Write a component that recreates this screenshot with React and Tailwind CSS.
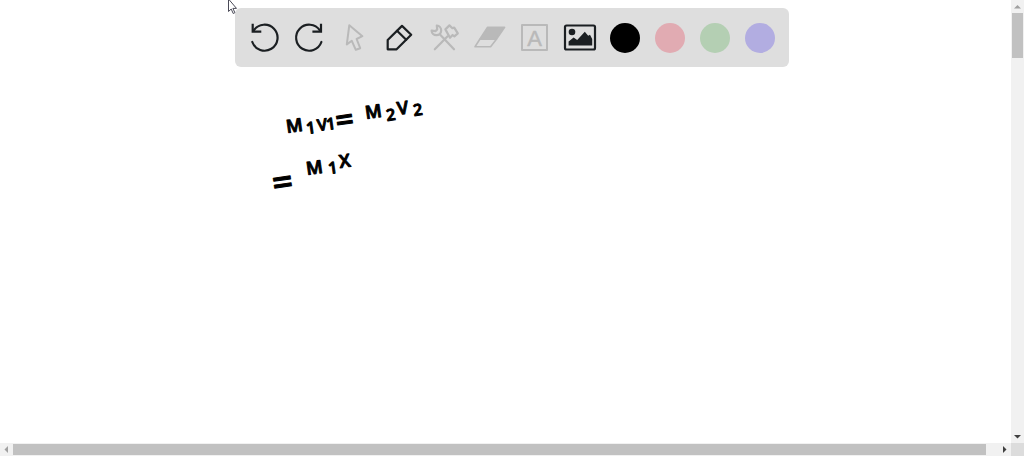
const INK = "#1b1f22";
const MUTED = "#b9b9b9";

const tools = [
  {
    name: "Undo",
    color: INK,
    icon: (
      <g strokeWidth="2.2">
        <path d="M5.3 22a13 13 0 1 0 1.5-11.6" />
        <path strokeLinecap="square" strokeLinejoin="miter" d="M5.7 4.8v6.9h7.5" />
      </g>
    ),
  },
  {
    name: "Redo",
    color: INK,
    icon: (
      <g strokeWidth="2.2">
        <path d="M29.4 22a13 13 0 1 1-1.5-11.6" />
        <path strokeLinecap="square" strokeLinejoin="miter" d="M29 4.8v6.9h-7.5" />
      </g>
    ),
  },
  {
    name: "Select",
    color: MUTED,
    icon: <path strokeWidth="2" d="M12.3 5.2 9.8 24.4l5-3.6 4 9 4.4-1.6-3.6-9.2 5.8-2.8z" />,
  },
  {
    name: "Pen",
    color: INK,
    icon: (
      <g strokeWidth="2.2">
        <path d="M5.7 29.3V20L20 5.9l9.2 8.8-14.6 14.6z" />
        <path d="m15 10.8 9.2 9" />
      </g>
    ),
  },
  {
    name: "Tools",
    color: MUTED,
    icon: (
      <g strokeWidth="2.2">
        <path d="M9.8 5.6a4.8 4.8 0 1 1-5.2 5l3.8.6 1.8-1.8z" />
        <path d="m13 14.6 14 14.7M7.800 29.300l12.800-13" />
        <path d="m18.4 9.400 4-4 3 2.800 1.800-.6 3.600 5.800-3.400 3-1.800-1.400-2.600 2.800z" />
      </g>
    ),
  },
  {
    name: "Eraser",
    color: MUTED,
    icon: (
      <g strokeWidth="1.6">
        <path fill="currentColor" d="M15.6 7.3h17l-8.2 12H7.800z" />
        <path d="M7.8 19.3 3 26.8h15.6l5.8-7.5" />
      </g>
    ),
  },
  {
    name: "Text",
    color: MUTED,
    icon: (
      <g>
        <rect x="5" y="5" width="25" height="25" strokeWidth="2" />
        <text
          x="17.5"
          y="25.5"
          textAnchor="middle"
          fontSize="22"
          fill="currentColor"
          strokeWidth="0.5"
          className="font-['Liberation_Sans',sans-serif]"
        >
          A
        </text>
      </g>
    ),
  },
  {
    name: "Image",
    color: INK,
    icon: (
      <g>
        <rect x="3" y="5.5" width="30" height="24" rx="1.5" strokeWidth="2.2" />
        <circle cx="10" cy="12" r="3.3" fill="currentColor" stroke="none" />
        <path
          fill="currentColor"
          stroke="none"
          d="M6.6 25.5v-4l5-4 3.6 2.5 7.6-8.200 3.400 4 1.800-1L30.200 19v6.500z"
        />
      </g>
    ),
  },
];

const swatches = [
  { name: "Black", className: "bg-black" },
  { name: "Pink", className: "bg-[#e1abb2]" },
  { name: "Green", className: "bg-[#b4cfb3]" },
  { name: "Purple", className: "bg-[#b2ade1]" },
];

// Notes placed on the board
const notes = [
  { text: "M", x: 287, y: 133, size: 18 },
  { text: "1", x: 307, y: 134, size: 16 },
  { text: "V", x: 318, y: 131, size: 16 },
  { text: "1", x: 327, y: 130, size: 16 },
  { text: "=", x: 337, y: 132, size: 32 },
  { text: "M", x: 366, y: 119, size: 18 },
  { text: "2", x: 387, y: 121, size: 16 },
  { text: "V", x: 398, y: 115, size: 18 },
  { text: "2", x: 414, y: 116, size: 16 },
  { text: "=", x: 274, y: 196, size: 36 },
  { text: "M", x: 307, y: 175, size: 18 },
  { text: "1", x: 329, y: 174, size: 16 },
  { text: "X", x: 340, y: 168, size: 18 },
];

const ToolButton = ({ tool }) => (
  <button
    type="button"
    aria-label={tool.name}
    className="flex h-full w-[45px] items-center justify-center"
  >
    <svg
      width="35"
      height="35"
      viewBox="0 0 35 35"
      fill="none"
      stroke="currentColor"
      strokeLinejoin="round"
      strokeLinecap="round"
      color={tool.color}
    >
      {tool.icon}
    </svg>
  </button>
);

const Toolbar = () => (
  <div className="absolute inset-x-0 top-2 flex justify-center">
    <div className="flex h-[59px] items-center rounded-md bg-[#dedede] px-[7px]">
      {tools.map((tool) => (
        <ToolButton key={tool.name} tool={tool} />
      ))}
      {swatches.map((swatch) => (
        <button
          key={swatch.name}
          type="button"
          aria-label={swatch.name}
          className="flex h-full w-[45px] items-center justify-center"
        >
          <span className={`size-[30px] rounded-full ${swatch.className}`} />
        </button>
      ))}
    </div>
  </div>
);

const Board = () => (
  <main className="min-w-0 flex-1 overflow-hidden bg-white">
    <svg
      className="h-full w-full font-['Open_Sans',sans-serif] font-semibold"
      fill="#000"
      stroke="#000"
      strokeWidth="1"
      strokeLinejoin="round"
    >
      {notes.map((note, i) => (
        <text
          key={i}
          fontSize={note.size}
          transform={`translate(${note.x} ${note.y}) rotate(-8)`}
        >
          {note.text}
        </text>
      ))}
    </svg>
  </main>
);

const Arrow = ({ label, d, muted }) => (
  <button
    type="button"
    aria-label={label}
    className="flex size-[13px] shrink-0 items-center justify-center"
  >
    <svg width="7" height="7" viewBox="0 0 7 7" fill={muted ? "#a0a0a0" : "#404040"}>
      <path d={d} />
    </svg>
  </button>
);

const App = () => (
  <div className="relative flex h-screen flex-col overflow-hidden bg-white">
    <div className="flex min-h-0 flex-1">
      <Board />
      {/* Vertical scrollbar */}
      <div className="flex w-[13px] flex-col bg-[#f1f1f1]">
        <Arrow label="Scroll up" d="M0 5.5h7L3.5 2z" muted />
        <div className="flex-1 px-px">
          <div className="h-[45px] bg-[#c1c1c1]" />
        </div>
        <Arrow label="Scroll down" d="M0 2h7L3.5 5.5z" />
      </div>
    </div>

    {/* Horizontal scrollbar */}
    <div className="flex h-[13px]">
      <div className="flex flex-1 bg-[#f1f1f1]">
        <Arrow label="Scroll left" d="M5 0v7L1.5 3.5z" muted />
        <div className="flex-1 py-px pr-3">
          <div className="h-full bg-[#c1c1c1]" />
        </div>
        <Arrow label="Scroll right" d="M2 0v7l3.5-3.5z" />
      </div>
      <div className="w-[13px] bg-[#dcdcdc]" />
    </div>

    <Toolbar />

    {/* Mouse pointer */}
    <svg
      className="absolute top-0 left-[227px]"
      width="12"
      height="15"
      viewBox="0 0 12 15"
      fill="#fff"
      stroke="#4b4b58"
      strokeWidth="1"
    >
      <path d="M1.5-1v12.5l2.7-2.5 2 4.5 1.7-.8-2-4.3h3.6z" />
    </svg>
  </div>
);

export default App;
